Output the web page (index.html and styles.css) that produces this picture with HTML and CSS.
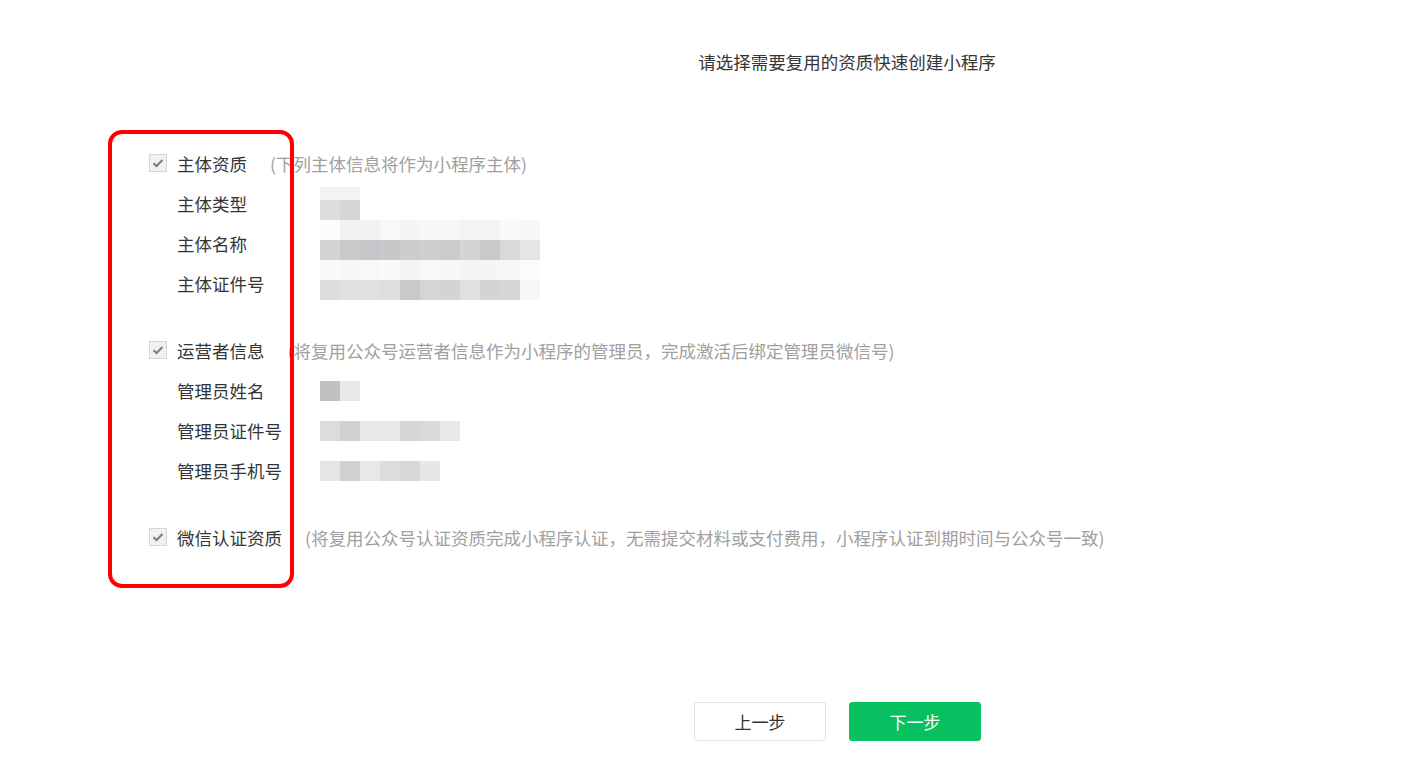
FILE: index.html
```html
<!DOCTYPE html>
<html lang="zh-CN">
<head>
<meta charset="UTF-8" />
<title>复用资质创建小程序</title>
<link rel="stylesheet" href="styles.css">
</head>
<body>

<div class="page">
  <h2 class="page-title">请选择需要复用的资质快速创建小程序</h2>

  <div class="reuse-list">
    <!-- 主体资质 -->
    <div class="reuse-group">
      <div class="group-head">
        <svg class="check" width="18" height="18" viewBox="0 0 18 18"><rect x="0.5" y="0.5" width="17" height="17" fill="#f1f1f1" stroke="#d6d6d6"/><path d="M4.5 9.2l3 2.8 6-6" fill="none" stroke="#7b7b7b" stroke-width="2"/></svg>
        <span class="group-name">主体资质</span>
        <span class="group-tip">(下列主体信息将作为小程序主体)</span>
      </div>
      <div class="info-row">
        <span class="info-label">主体类型</span>
        <div class="mosaic mosaic-tight">
          <div class="mrow mrow-short"><i class="c-f3"></i><i class="c-f3"></i></div>
          <div class="mrow"><i class="c-dc"></i><i class="c-d6"></i></div>
        </div>
      </div>
      <div class="info-row">
        <span class="info-label">主体名称</span>
        <div class="mosaic mosaic-tight">
          <div class="mrow"><i class="c-fc"></i><i class="c-f2"></i><i class="c-f2"></i><i class="c-f8"></i><i class="c-f5"></i><i class="c-f7"></i><i class="c-f7"></i><i class="c-f3"></i><i class="c-f3"></i><i class="c-f9"></i><i class="c-f7"></i></div>
          <div class="mrow"><i class="c-d2"></i><i class="c-ca"></i><i class="c-c5"></i><i class="c-c8"></i><i class="c-cd"></i><i class="c-cf"></i><i class="c-cb"></i><i class="c-d4"></i><i class="c-c9"></i><i class="c-d9"></i><i class="c-e5"></i></div>
        </div>
      </div>
      <div class="info-row">
        <span class="info-label">主体证件号</span>
        <div class="mosaic mosaic-tight">
          <div class="mrow"><i class="c-f9"></i><i class="c-f7"></i><i class="c-f8"></i><i class="c-fa"></i><i class="c-f4"></i><i class="c-f8"></i><i class="c-f7"></i><i class="c-f4"></i><i class="c-f5"></i><i class="c-f6"></i><i class="c-fb"></i></div>
          <div class="mrow"><i class="c-dc"></i><i class="c-e0"></i><i class="c-e1"></i><i class="c-de"></i><i class="c-ca"></i><i class="c-d5"></i><i class="c-d3"></i><i class="c-e0"></i><i class="c-d3"></i><i class="c-d6"></i><i class="c-f6"></i></div>
        </div>
      </div>
    </div>

    <!-- 运营者信息 -->
    <div class="reuse-group">
      <div class="group-head">
        <svg class="check" width="18" height="18" viewBox="0 0 18 18"><rect x="0.5" y="0.5" width="17" height="17" fill="#f1f1f1" stroke="#d6d6d6"/><path d="M4.5 9.2l3 2.8 6-6" fill="none" stroke="#7b7b7b" stroke-width="2"/></svg>
        <span class="group-name">运营者信息</span>
        <span class="group-tip">(将复用公众号运营者信息作为小程序的管理员，完成激活后绑定管理员微信号)</span>
      </div>
      <div class="info-row">
        <span class="info-label">管理员姓名</span>
        <div class="mosaic">
          <div class="mrow"><i class="c-c1"></i><i class="c-e9"></i></div>
        </div>
      </div>
      <div class="info-row">
        <span class="info-label">管理员证件号</span>
        <div class="mosaic">
          <div class="mrow"><i class="c-dc"></i><i class="c-d1"></i><i class="c-e9"></i><i class="c-e8"></i><i class="c-d6"></i><i class="c-da"></i><i class="c-e8"></i></div>
        </div>
      </div>
      <div class="info-row">
        <span class="info-label">管理员手机号</span>
        <div class="mosaic">
          <div class="mrow"><i class="c-e5"></i><i class="c-d1"></i><i class="c-e8"></i><i class="c-dc"></i><i class="c-d8"></i><i class="c-e7"></i></div>
        </div>
      </div>
    </div>

    <!-- 微信认证资质 -->
    <div class="reuse-group">
      <div class="group-head">
        <svg class="check" width="18" height="18" viewBox="0 0 18 18"><rect x="0.5" y="0.5" width="17" height="17" fill="#f1f1f1" stroke="#d6d6d6"/><path d="M4.5 9.2l3 2.8 6-6" fill="none" stroke="#7b7b7b" stroke-width="2"/></svg>
        <span class="group-name">微信认证资质</span>
        <span class="group-tip">(将复用公众号认证资质完成小程序认证，无需提交材料或支付费用，小程序认证到期时间与公众号一致)</span>
      </div>
    </div>

    <div class="mark-box"></div>
  </div>

  <div class="actions">
    <button class="btn btn-default" type="button">上一步</button>
    <button class="btn btn-primary" type="button">下一步</button>
  </div>
</div>

</body>
</html>
```

FILE: styles.css
```css
body {
  margin: 0;
  background: #fff;
  font-family: "Microsoft YaHei", "Noto Sans CJK SC", "Noto Sans", sans-serif;
  color: #353535;
  font-size: 17.5px;
}
.page {
  width: 1408px;
  height: 768px;
  overflow: hidden;
}
.page-title {
  margin: 0;
  padding: 50px 0 0 286px;
  font-size: 17.5px;
  font-weight: 400;
  line-height: 24px;
  text-align: center;
  color: #353535;
}
.reuse-list {
  position: relative;
  margin-top: 69px;
  padding-left: 149px;
}
.reuse-group {
  margin-bottom: 27px;
}
.group-head {
  display: flex;
  align-items: center;
  height: 40px;
}
.check {
  display: block;
  flex: none;
  margin-right: 10px;
}
.group-name {
  white-space: nowrap;
}
.group-tip {
  margin-left: 23px;
  color: #a0a0a0;
  white-space: nowrap;
}
.info-row {
  display: flex;
  align-items: center;
  height: 40px;
  padding-left: 28px;
}
.info-label {
  width: 143px;
  flex: none;
  white-space: nowrap;
}
.mosaic {
  display: flex;
  flex-direction: column;
  margin-top: 1px;
}
.mosaic-tight {
  align-self: flex-start;
  margin-top: -3px;
}
.mrow {
  display: flex;
  height: 20px;
}
.mrow-short {
  height: 13px;
  margin-top: 7px;
}
.mrow i {
  display: block;
  width: 20px;
  height: 100%;
}
.c-c1 { background: #c1c1c1; }
.c-c5 { background: #c5c6c9; }
.c-c8 { background: #c8c8c8; }
.c-c9 { background: #cac8c9; }
.c-ca { background: #cac9c8; }
.c-cb { background: #cbcbcb; }
.c-cd { background: #cdcdcd; }
.c-cf { background: #cfcfcf; }
.c-d1 { background: #d1d1d3; }
.c-d2 { background: #d2d2d2; }
.c-d3 { background: #d3d4d6; }
.c-d4 { background: #d4d4d4; }
.c-d5 { background: #d3d5d8; }
.c-d6 { background: #d6d6d6; }
.c-d8 { background: #d8d8d8; }
.c-d9 { background: #d9d9d9; }
.c-da { background: #dadada; }
.c-dc { background: #dcdcdc; }
.c-de { background: #dcdee0; }
.c-e0 { background: #e0e0e0; }
.c-e1 { background: #e2e1df; }
.c-e5 { background: #e5e5e4; }
.c-e7 { background: #e6e7e9; }
.c-e8 { background: #e8e8e7; }
.c-e9 { background: #e9e9e9; }
.c-f2 { background: #f2f2f2; }
.c-f3 { background: #f3f3f3; }
.c-f4 { background: #f4f4f4; }
.c-f5 { background: #f5f5f5; }
.c-f6 { background: #f5f6f7; }
.c-f7 { background: #f7f7f7; }
.c-f8 { background: #f8f8f8; }
.c-f9 { background: #f9f9f9; }
.c-fa { background: #fafafa; }
.c-fb { background: #fbfbfb; }
.c-fc { background: #fcfcfc; }

/* 标注框 */
.mark-box {
  position: absolute;
  left: 108px;
  top: -13px;
  width: 178px;
  height: 450px;
  border: 4px solid #ff0000;
  border-radius: 14px;
  pointer-events: none;
}

.actions {
  display: flex;
  justify-content: center;
  gap: 23px;
  margin-top: 145px;
  padding: 0 19px 0 286px;
}
.btn {
  width: 132px;
  height: 39px;
  border-radius: 3px;
  font-family: inherit;
  font-size: 17px;
  cursor: pointer;
}
.btn-default {
  background: #fff;
  border: 1px solid #e3e3e3;
  color: #353535;
}
.btn-primary {
  background: #07c160;
  border: 1px solid #07c160;
  color: #fff;
}
```
